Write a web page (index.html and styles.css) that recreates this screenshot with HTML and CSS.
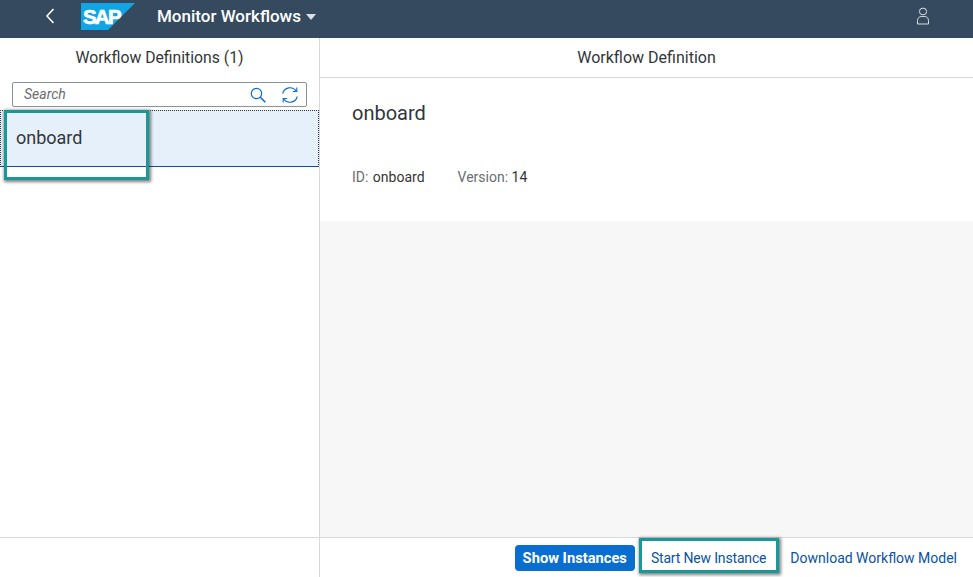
FILE: index.html
```html
<!DOCTYPE html>
<html lang="en">
<head>
<meta charset="utf-8">
<title>Monitor Workflows</title>
<link rel="stylesheet" href="styles.css">
</head>
<body>
<div class="app">
  <header class="shell">
    <svg class="back" viewBox="0 0 12 18" width="12" height="18"><path d="M9.500 2 3 9l6.500 7" fill="none" stroke="#fff" stroke-width="1.600"/></svg>
    <svg class="logo" viewBox="0 0 54 27" width="54" height="27"><path d="M0 0h54L27 27H0z" fill="#12a5e6"/><text x="2" y="21" class="logo-text">SAP</text></svg>
    <span class="title">Monitor Workflows</span>
    <span class="caret"></span>
    <svg class="user" viewBox="0 0 14 18" width="14" height="18"><g fill="none" stroke="#d5dee8" stroke-width="1"><ellipse cx="7" cy="4.500" rx="3.600" ry="3.400"/><path d="M1.500 17v-3.500c0-2.200 1.600-4 3.800-4h3.400c2.200 0 3.800 1.800 3.800 4V17z"/></g></svg>
  </header>
  <main class="panes">
    <section class="master">
      <h2 class="pane-title master-title">Workflow Definitions (1)</h2>
      <div class="search">
        <span class="search-text">Search</span>
        <svg class="search-icon" viewBox="0 0 16 16" width="16" height="16"><g fill="none" stroke="#0a6ed1"><circle cx="6.500" cy="6.500" r="5.200" stroke-width="1.200"/><path d="m10.300 10.300 5 5" stroke-width="1.600"/></g></svg>
        <svg class="refresh-icon" viewBox="0 0 18 18" width="18" height="18"><g fill="none" stroke="#0a6ed1" stroke-width="1.100"><path d="M1.700 7.500A7.500 7.500 0 0 1 15.200 5"/><path d="M16.300 10.500A7.500 7.500 0 0 1 2.800 13"/><path d="M15.800 1.500v4h-4M2.200 16.500v-4h4"/></g></svg>
      </div>
      <div class="item">onboard</div>
      <div class="master-fill"></div>
      <div class="bar"></div>
    </section>
    <section class="detail">
      <h2 class="pane-title detail-title">Workflow Definition</h2>
      <div class="summary">
        <div class="name">onboard</div>
        <div class="attrs">
          <span class="attr attr-id"><span class="label">ID:</span> onboard</span>
          <span class="attr"><span class="label">Version:</span> 14</span>
        </div>
      </div>
      <div class="detail-fill"></div>
      <div class="bar actions">
        <button class="btn primary">Show Instances</button>
        <button class="btn start">Start New Instance</button>
        <button class="btn">Download Workflow Model</button>
      </div>
    </section>
  </main>
</div>
<div class="mark mark-item"></div>
<div class="mark mark-start"></div>
</body>
</html>
```
FILE: styles.css
```css
* { box-sizing: border-box; }
html, body { margin: 0; height: 100%; overflow: hidden; }
body { font-family: Roboto, "Liberation Sans", sans-serif; color: #32363a; background: #fff; }
.app { display: flex; flex-direction: column; width: 973px; height: 577px; }

.shell { height: 38px; flex: none; background: #354a5f; display: flex; align-items: center; color: #fff; padding: 0 0 6px 44px; }
.back { margin-right: 25px; }
.logo { margin: 1px 22px 0 0; }
.logo-text { font: bold 20.500px "Liberation Sans", sans-serif; fill: #fff; stroke: #fff; stroke-width: .7px; letter-spacing: -1.800px; }
.title { font-size: 17px; font-weight: 500; }
.caret { width: 0; height: 0; margin: 1px 0 0 5px; border: 5px solid transparent; border-top: 6px solid #d8e0e8; border-bottom: 0; }
.user { margin-left: auto; margin-right: 43px; }

.panes { flex: 1; display: flex; min-height: 0; }
.master { width: 320px; flex: none; display: flex; flex-direction: column; border-right: 1px solid #d9d9d9; }
.detail { flex: 1; display: flex; flex-direction: column; min-width: 0; }

.pane-title { margin: 0; height: 40px; flex: none; font-size: 16px; font-weight: 400; line-height: 40px; text-align: center; }
.master-title { font-size: 15.750px; }
.detail-title { border-bottom: 1px solid #d9d9d9; }

.search { margin: 4px 12px 0; height: 25px; flex: none; border: 1px solid #89919a; border-radius: 2px; display: flex; align-items: center; padding: 0 7px 0 11px; }
.search-text { flex: 1; font-size: 14px; font-style: italic; color: #6a6d70; margin-top: -2px; }
.search-icon { margin-right: 15px; }

.item { margin-top: 3px; height: 57px; flex: none; background: #e5f0fa; border: 1px dotted #32363a; border-bottom: 1px solid #0854a0; padding-left: 15px; font-size: 18px; line-height: 54px; }
.master-fill { flex: 1; }

.bar { height: 40px; flex: none; border-top: 1px solid #d9d9d9; background: #fff; }
.actions { display: flex; align-items: center; justify-content: flex-end; padding-right: 8px; gap: 8px; }

.summary { height: 143px; flex: none; padding: 23px 32px 0; background: #fff; }
.name { font-size: 20px; line-height: 24px; }
.attrs { margin-top: 43px; display: flex; gap: 32px; font-size: 14px; line-height: 18px; }
.label { color: #6a6d70; }
.attr-id { padding-left: 0; word-spacing: 1px; margin-right: 1px; }
.detail-fill { flex: 1; background: #f7f7f7; }

.btn { height: 26px; padding: 0 8px; border: 0; border-radius: 4px; font-family: inherit; font-size: 14px; background: transparent; color: #0854a0; white-space: nowrap; }
.primary { background: #0a6ed1; color: #fff; font-weight: 700; font-size: 14.700px; }
.start { letter-spacing: -.170px; }

.mark { position: absolute; border: 3px solid #1a9898; box-shadow: 1px 1px 3px 1px rgba(0, 0, 0, .5); }
.mark-item { left: 4px; top: 110px; width: 145px; height: 70px; }
.mark-start { left: 639px; top: 538px; width: 140px; height: 35px; }
```
